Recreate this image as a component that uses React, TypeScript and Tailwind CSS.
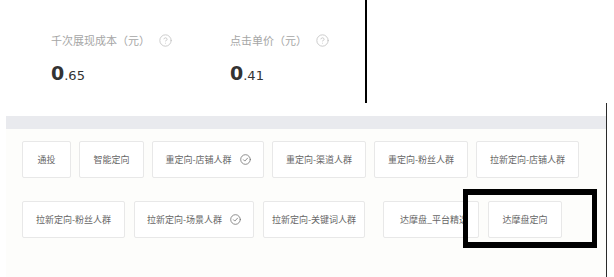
import React from "react";

const cjk = { fontFamily: '"Noto Sans CJK SC", "Noto Sans", sans-serif' };

const QuestionIcon = () => (
  <svg width="13" height="13" viewBox="0 0 24 24" fill="none" stroke="#c4c4c4" strokeWidth="1.6" strokeLinecap="round" strokeLinejoin="round">
    <circle cx="12" cy="12" r="10.5" />
    <path d="M9.09 9a3 3 0 0 1 5.83 1c0 2-3 3-3 3" />
    <path d="M12 17h.01" />
  </svg>
);

const CheckIcon = () => (
  <svg width="11" height="11" viewBox="0 0 24 24" fill="none" stroke="#777" strokeWidth="1.8" strokeLinecap="round" strokeLinejoin="round">
    <circle cx="12" cy="12" r="10.5" />
    <path d="m7.5 12.5 3 3 6-6.5" />
  </svg>
);

type Tag = { label: string; w: string; checked?: boolean; extra?: string };

const row1: Tag[] = [
  { label: "通投", w: "w-[49px]" },
  { label: "智能定向", w: "w-[65px]" },
  { label: "重定向-店铺人群", w: "w-[112px]", checked: true },
  { label: "重定向-渠道人群", w: "w-[94px]" },
  { label: "重定向-粉丝人群", w: "w-[94px]" },
  { label: "拉新定向-店铺人群", w: "w-[103px]" },
];

const row2: Tag[] = [
  { label: "拉新定向-粉丝人群", w: "w-[103px]" },
  { label: "拉新定向-场景人群", w: "w-[120px]", checked: true },
  { label: "拉新定向-关键词人群", w: "w-[102px]" },
  { label: "达摩盘_平台精选", w: "w-[96px]", extra: "ml-[9px] justify-start pl-[16px]" },
  { label: "达摩盘定向", w: "w-[74px]" },
];

const TagButton = ({ tag }: { tag: Tag }) => (
  <div
    className={`${tag.w} ${tag.extra ?? "justify-center"} h-[37px] shrink-0 flex items-center gap-[8px] overflow-hidden whitespace-nowrap bg-white border border-[#e8e8e8] rounded-[2px] text-[9px] text-[#666]`}
    style={cjk}
  >
    <span>{tag.label}</span>
    {tag.checked && <CheckIcon />}
  </div>
);

const Stat = ({ label, big, small, w }: { label: string; big: string; small: string; w: string }) => (
  <div className={`${w} flex flex-col`}>
    <div className="flex items-center gap-[9px] text-[11px] leading-[14px] text-[#a6a6a6]" style={cjk}>
      <span>{label}</span>
      <QuestionIcon />
    </div>
    <div className="mt-[15px] flex items-baseline text-[#333]" style={{ fontFamily: '"DejaVu Sans", sans-serif' }}>
      <span className="text-[19px] font-bold leading-[22px]">{big}</span>
      <span className="text-[13px] leading-[22px]">{small}</span>
    </div>
  </div>
);

export default function App() {
  return (
    <div className="relative w-[614px] h-[277px] bg-white overflow-hidden">
      <div className="w-[367px] h-[103px] border-r-2 border-black flex pl-[51px] pt-[33px]">
        <Stat w="w-[179px]" label="千次展现成本（元）" big="0" small=".65" />
        <Stat w="w-[130px]" label="点击单价（元）" big="0" small=".41" />
      </div>

      <div className="ml-[6px] w-[601px] h-[174px] flex flex-col border-r-[1.5px] border-[#2a2a2a]">
        <div className="h-[13px] bg-white" />
        <div className="h-[13px] bg-[#e9eaee]" />
        <div className="flex-1 bg-[#fdfdfb] pl-[16px] pt-[12px] flex flex-col gap-[23px]">
          <div className="flex gap-[8px]">
            {row1.map((t) => (
              <TagButton key={t.label} tag={t} />
            ))}
          </div>
          <div className="flex gap-[9px]">
            {row2.map((t) => (
              <TagButton key={t.label} tag={t} />
            ))}
          </div>
        </div>
      </div>

      <div className="absolute left-[463px] top-[189px] w-[134px] h-[59px] border-x-[5px] border-y-[6px] border-black" />
    </div>
  );
}
